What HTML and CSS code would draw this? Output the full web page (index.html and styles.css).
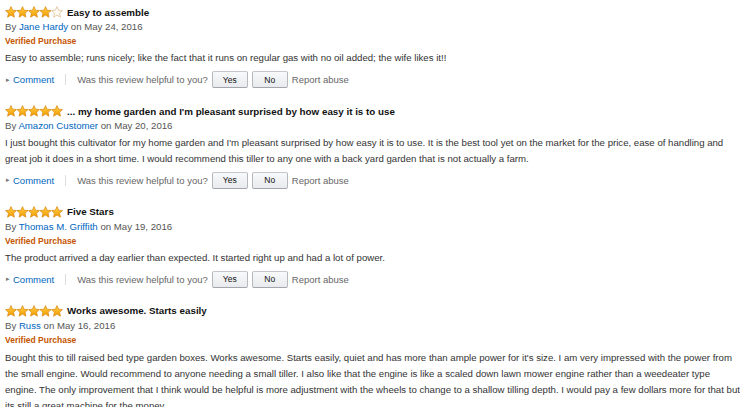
FILE: index.html
```html
<!DOCTYPE html>
<html>
<head>
<meta charset="utf-8">
<link rel="stylesheet" href="styles.css">
</head>
<body>
<div class="reviews">

  <div class="review">
    <div class="title-row">
      <svg class="stars" width="58" height="12" viewBox="0 0 58 12">
        <defs>
          <linearGradient id="g" x1="0" y1="0" x2="0" y2="1">
            <stop offset="0" stop-color="#ffd24a"/>
            <stop offset="1" stop-color="#f29a00"/>
          </linearGradient>
        </defs>
        <g stroke="#d9850c" stroke-width="0.7" stroke-linejoin="round" fill="url(#g)">
          <polygon points="6,0.6 7.6,4.2 11.5,4.6 8.6,7.2 9.4,11.2 6,9.1 2.6,11.2 3.4,7.2 0.5,4.6 4.4,4.2"/>
          <polygon transform="translate(11.5 0)" points="6,0.6 7.6,4.2 11.5,4.6 8.6,7.2 9.4,11.2 6,9.1 2.6,11.2 3.4,7.2 0.5,4.6 4.4,4.2"/>
          <polygon transform="translate(23 0)" points="6,0.6 7.6,4.2 11.5,4.6 8.6,7.2 9.4,11.2 6,9.1 2.6,11.2 3.4,7.2 0.5,4.6 4.4,4.2"/>
          <polygon transform="translate(34.5 0)" points="6,0.6 7.6,4.2 11.5,4.6 8.6,7.2 9.4,11.2 6,9.1 2.6,11.2 3.4,7.2 0.5,4.6 4.4,4.2"/>
        </g>
        <polygon transform="translate(46 0)" fill="#fdfaf2" stroke="#d7b98a" stroke-width="0.7" stroke-linejoin="round" points="6,0.6 7.6,4.2 11.5,4.6 8.6,7.2 9.4,11.2 6,9.1 2.6,11.2 3.4,7.2 0.5,4.6 4.4,4.2"/>
      </svg>
      <span class="title">Easy to assemble</span>
    </div>
    <div class="byline">By <a class="author">Jane Hardy</a> on May 24, 2016</div>
    <div class="verified">Verified Purchase</div>
    <p class="body">Easy to assemble; runs nicely; like the fact that it runs on regular gas with no oil added; the wife likes it!!</p>
    <div class="actions">
      <span class="comment"><span class="tri">&#9656;</span><a class="link">Comment</a></span>
      <span class="sep"></span>
      <span class="helpful">Was this review helpful to you?</span>
      <button class="btn">Yes</button>
      <button class="btn">No</button>
      <span class="report">Report abuse</span>
    </div>
  </div>

  <div class="review">
    <div class="title-row">
      <svg class="stars" width="58" height="12" viewBox="0 0 58 12">
        <g stroke="#d9850c" stroke-width="0.7" stroke-linejoin="round" fill="url(#g)">
          <polygon points="6,0.6 7.6,4.2 11.5,4.6 8.6,7.2 9.4,11.2 6,9.1 2.6,11.2 3.4,7.2 0.5,4.6 4.4,4.2"/>
          <polygon transform="translate(11.5 0)" points="6,0.6 7.6,4.2 11.5,4.6 8.6,7.2 9.4,11.2 6,9.1 2.6,11.2 3.4,7.2 0.5,4.6 4.4,4.2"/>
          <polygon transform="translate(23 0)" points="6,0.6 7.6,4.2 11.5,4.6 8.6,7.2 9.4,11.2 6,9.1 2.6,11.2 3.4,7.2 0.5,4.6 4.4,4.2"/>
          <polygon transform="translate(34.5 0)" points="6,0.6 7.6,4.2 11.5,4.6 8.6,7.2 9.4,11.2 6,9.1 2.6,11.2 3.4,7.2 0.5,4.6 4.4,4.2"/>
          <polygon transform="translate(46 0)" points="6,0.6 7.6,4.2 11.5,4.6 8.6,7.2 9.4,11.2 6,9.1 2.6,11.2 3.4,7.2 0.5,4.6 4.4,4.2"/>
        </g>
      </svg>
      <span class="title">... my home garden and I'm pleasant surprised by how easy it is to use</span>
    </div>
    <div class="byline">By <a class="author">Amazon Customer</a> on May 20, 2016</div>
    <p class="body">I just bought this cultivator for my home garden and I'm pleasant surprised by how easy it is to use. It is the best tool yet on the market for the price, ease of handling and great job it does in a short time. I would recommend this tiller to any one with a back yard garden that is not actually a farm.</p>
    <div class="actions">
      <span class="comment"><span class="tri">&#9656;</span><a class="link">Comment</a></span>
      <span class="sep"></span>
      <span class="helpful">Was this review helpful to you?</span>
      <button class="btn">Yes</button>
      <button class="btn">No</button>
      <span class="report">Report abuse</span>
    </div>
  </div>

  <div class="review">
    <div class="title-row">
      <svg class="stars" width="58" height="12" viewBox="0 0 58 12">
        <g stroke="#d9850c" stroke-width="0.7" stroke-linejoin="round" fill="url(#g)">
          <polygon points="6,0.6 7.6,4.2 11.5,4.6 8.6,7.2 9.4,11.2 6,9.1 2.6,11.2 3.4,7.2 0.5,4.6 4.4,4.2"/>
          <polygon transform="translate(11.5 0)" points="6,0.6 7.6,4.2 11.5,4.6 8.6,7.2 9.4,11.2 6,9.1 2.6,11.2 3.4,7.2 0.5,4.6 4.4,4.2"/>
          <polygon transform="translate(23 0)" points="6,0.6 7.6,4.2 11.5,4.6 8.6,7.2 9.4,11.2 6,9.1 2.6,11.2 3.4,7.2 0.5,4.6 4.4,4.2"/>
          <polygon transform="translate(34.5 0)" points="6,0.6 7.6,4.2 11.5,4.6 8.6,7.2 9.4,11.2 6,9.1 2.6,11.2 3.4,7.2 0.5,4.6 4.4,4.2"/>
          <polygon transform="translate(46 0)" points="6,0.6 7.6,4.2 11.5,4.6 8.6,7.2 9.4,11.2 6,9.1 2.6,11.2 3.4,7.2 0.5,4.6 4.4,4.2"/>
        </g>
      </svg>
      <span class="title">Five Stars</span>
    </div>
    <div class="byline">By <a class="author">Thomas M. Griffith</a> on May 19, 2016</div>
    <div class="verified">Verified Purchase</div>
    <p class="body">The product arrived a day earlier than expected. It started right up and had a lot of power.</p>
    <div class="actions">
      <span class="comment"><span class="tri">&#9656;</span><a class="link">Comment</a></span>
      <span class="sep"></span>
      <span class="helpful">Was this review helpful to you?</span>
      <button class="btn">Yes</button>
      <button class="btn">No</button>
      <span class="report">Report abuse</span>
    </div>
  </div>

  <div class="review">
    <div class="title-row">
      <svg class="stars" width="58" height="12" viewBox="0 0 58 12">
        <g stroke="#d9850c" stroke-width="0.7" stroke-linejoin="round" fill="url(#g)">
          <polygon points="6,0.6 7.6,4.2 11.5,4.6 8.6,7.2 9.4,11.2 6,9.1 2.6,11.2 3.4,7.2 0.5,4.6 4.4,4.2"/>
          <polygon transform="translate(11.5 0)" points="6,0.6 7.6,4.2 11.5,4.6 8.6,7.2 9.4,11.2 6,9.1 2.6,11.2 3.4,7.2 0.5,4.6 4.4,4.2"/>
          <polygon transform="translate(23 0)" points="6,0.6 7.6,4.2 11.5,4.6 8.6,7.2 9.4,11.2 6,9.1 2.6,11.2 3.4,7.2 0.5,4.6 4.4,4.2"/>
          <polygon transform="translate(34.5 0)" points="6,0.6 7.6,4.2 11.5,4.6 8.6,7.2 9.4,11.2 6,9.1 2.6,11.2 3.4,7.2 0.5,4.6 4.4,4.2"/>
          <polygon transform="translate(46 0)" points="6,0.6 7.6,4.2 11.5,4.6 8.6,7.2 9.4,11.2 6,9.1 2.6,11.2 3.4,7.2 0.5,4.6 4.4,4.2"/>
        </g>
      </svg>
      <span class="title">Works awesome. Starts easily</span>
    </div>
    <div class="byline">By <a class="author">Russ</a> on May 16, 2016</div>
    <div class="verified">Verified Purchase</div>
    <p class="body body-last">Bought this to till raised bed type garden boxes. Works awesome. Starts easily, quiet and has more than ample power for it's size. I am very impressed with the power from the small engine. Would recommend to anyone needing a small tiller. I also like that the engine is like a scaled down lawn mower engine rather than a weedeater type<br>engine. The only improvement that I think would be helpful is more adjustment with the wheels to change to a shallow tilling depth. I would pay a few dollars more for that but its still a great machine for the money.</p>
  </div>

</div>
</body>
</html>
```

FILE: styles.css
```css
html, body {
  margin: 0;
  padding: 0;
  background: #ffffff;
  overflow: hidden;
}

body {
  font-family: "Liberation Sans", Arial, sans-serif;
  font-size: 9.65px;
  color: #333333;
}

.reviews {
  padding: 5px 0 0 5px;
  width: 735px;
}

.review {
  margin-bottom: 15.5px;
}

.title-row {
  display: flex;
  align-items: center;
  height: 14px;
  gap: 4px;
}

.stars {
  display: block;
  flex: none;
}

.title {
  font-weight: bold;
  font-size: 9.8px;
  color: #111111;
  white-space: nowrap;
}

.byline {
  line-height: 15px;
  color: #555555;
}

.author {
  color: #0066c0;
}

.verified {
  line-height: 14px;
  font-size: 8.5px;
  font-weight: bold;
  color: #c45500;
}

.body {
  margin: 2px 0 0 0;
  line-height: 15.6px;
  color: #333333;
}

.body-last {
  margin-top: 3.5px;
  line-height: 16px;
}

.actions {
  margin-top: 5px;
  height: 18px;
  display: flex;
  align-items: center;
  font-size: 9.5px;
}

.comment {
  display: flex;
  align-items: center;
  padding-left: 1px;
}

.tri {
  color: #777777;
  font-size: 7px;
  width: 7px;
}

.link {
  color: #0066c0;
}

.sep {
  width: 1px;
  height: 11px;
  background: #dddddd;
  margin: 0 11px 0 11px;
}

.helpful {
  color: #666666;
  margin-right: 4px;
}

.btn {
  font-family: "Liberation Sans", Arial, sans-serif;
  font-size: 8.5px;
  color: #111111;
  width: 36px;
  height: 17px;
  padding: 0;
  margin: 0 4px 0 0;
  border: 1px solid #adb1b8;
  border-color: #c3c6cb #b4b7bc #a2a6ac;
  border-radius: 2px;
  background: linear-gradient(#f8f9fa, #e8eaed);
}

.report {
  color: #666666;
}
```
